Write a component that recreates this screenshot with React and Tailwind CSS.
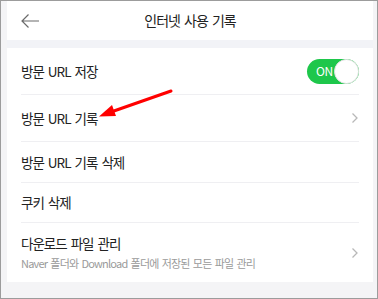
import React from 'react';

const Chevron = () => (
  <svg width="8" height="12" viewBox="0 0 8 12" className="shrink-0">
    <path d="M1.5 1.5 L6 6 L1.5 10.5" fill="none" stroke="#b8b8b8" strokeWidth="1.3" />
  </svg>
);

const Row = ({ h, children, last }) => (
  <div className={`mx-[14px] flex items-center ${last ? '' : 'border-b border-[#efeff2]'}`} style={{ height: h }}>
    {children}
  </div>
);

export default function App() {
  return (
    <div
      className="relative w-[378px] h-[299px] border border-[#9c9c9c] bg-[#f4f4f6] pl-[6px] pr-[4px] overflow-hidden"
      style={{ fontFamily: '"Noto Sans CJK KR", "Noto Sans", sans-serif' }}
    >
      {/* header */}
      <div className="h-[39px] bg-white flex items-center relative">
        <svg width="20" height="16" viewBox="0 0 20 16" className="ml-[13px]">
          <path d="M19 8 H2 M8.5 1.5 L2 8 L8.5 14.5" fill="none" stroke="#6b6b6b" strokeWidth="1.2" />
        </svg>
        <div className="absolute inset-0 flex items-center justify-center text-[14px] text-[#222] tracking-[-1px] [word-spacing:2px]">
          인터넷 사용 기록
        </div>
      </div>
      <div className="h-[8px] bg-[#f2f3f7]" />

      {/* list */}
      <div className="bg-white text-[13.5px] text-[#222] tracking-[-1px] [word-spacing:2px]">
        <Row h={47}>
          <span className="flex-1">방문 URL 저장</span>
          <div className="relative w-[52px] h-[25px] rounded-full bg-[#1ec74b] flex items-center [word-spacing:0]">
            <span className="ml-[9px] text-[12px] text-white leading-none tracking-[-0.5px]">ON</span>
            <div className="absolute right-0 top-0 w-[25px] h-[25px] rounded-full bg-white border border-[#e2e2e2]" />
          </div>
        </Row>
        <Row h={47}>
          <span className="flex-1">방문 URL 기록</span>
          <Chevron />
        </Row>
        <Row h={41}>
          <span className="flex-1">방문 URL 기록 삭제</span>
        </Row>
        <Row h={40}>
          <span className="flex-1">쿠키 삭제</span>
        </Row>
        <Row h={59} last>
          <div className="flex-1 flex flex-col pb-[2px]">
            <span className="leading-[22px]">다운로드 파일 관리</span>
            <span className="text-[11px] text-[#9a9a9a] leading-[18px] tracking-[-0.8px] [word-spacing:1.5px]">
              Naver 폴더와 Download 폴더에 저장된 모든 파일 관리
            </span>
          </div>
          <Chevron />
        </Row>
      </div>

      {/* red annotation arrow */}
      <svg className="absolute left-0 top-0 pointer-events-none" width="378" height="299">
        <line x1="170" y1="90" x2="110" y2="111" stroke="#f00" strokeWidth="3" strokeLinecap="round" />
        <polygon points="98,115.5 111,104 115,115" fill="#f00" />
      </svg>
    </div>
  );
}
